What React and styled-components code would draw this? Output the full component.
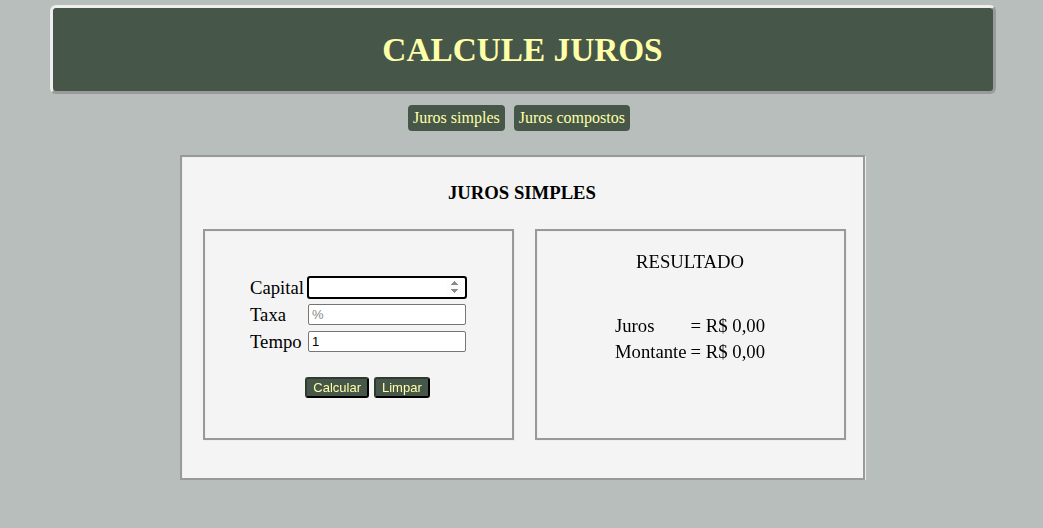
import React from 'react';
import styled, { createGlobalStyle } from 'styled-components';

const GlobalStyle = createGlobalStyle`
  html, body {
    margin: 0;
    background: #b8bebb;
    font-family: "Liberation Serif", "Times New Roman", serif;
    color: #000;
  }
`;

const Page = styled.div`
  padding-top: 5px;
  display: flex;
  flex-direction: column;
  align-items: center;
`;

const Header = styled.header`
  box-sizing: border-box;
  width: 946px;
  height: 89px;
  margin-left: 2px;
  background: #465749;
  border: 3px solid;
  border-color: #eeeeee #9a9a9a #9a9a9a #eeeeee;
  border-radius: 6px;
  display: flex;
  align-items: center;
  justify-content: center;
`;

const Title = styled.h1`
  margin: 0;
  font-size: 33.3px;
  font-weight: bold;
  color: #ffffa8;
`;

const Nav = styled.nav`
  display: flex;
  gap: 9px;
  margin-top: 11px;
  margin-right: 5px;
`;

const NavButton = styled.button`
  font-family: "Liberation Serif", serif;
  font-size: 16px;
  color: #ffffa8;
  background: #465749;
  border: none;
  border-radius: 4px;
  height: 26px;
  padding: 0 5px;
  cursor: pointer;
`;

const Panel = styled.section`
  box-sizing: border-box;
  width: 685px;
  height: 325px;
  margin-top: 24px;
  margin-left: 1px;
  background: #f4f4f4;
  border: 2px solid #999;
  box-shadow: 1px 1px 0 #eee, inset 1px 1px 0 #eee;
  padding: 0 0 0 21px;
`;

const PanelTitle = styled.h3`
  margin: 25px 0 0 -21px;
  text-align: center;
  font-size: 18.7px;
  line-height: 22px;
  font-weight: bold;
`;

const Columns = styled.div`
  display: flex;
  gap: 21px;
  margin-top: 25px;
`;

const Box = styled.div`
  box-sizing: border-box;
  width: 311px;
  height: 211px;
  border: 2px solid #999;
  box-shadow: 1px 1px 0 #eee, inset 1px 1px 0 #eee;
  display: flex;
  flex-direction: column;
  align-items: center;
  padding-top: ${p => p.$top}px;
`;

const Form = styled.table`
  border-collapse: separate;
  border-spacing: 4px 6px;
  margin: 0;
  font-size: 18.7px;
  td {
    padding: 0;
    height: 21px;
    line-height: 21px;
    vertical-align: middle;
  }
`;

const Input = styled.input`
  display: block;
  box-sizing: border-box;
  width: 158px;
  height: 21px;
  border: 1px solid #767676;
  border-radius: 2px;
  padding: 1px 3px;
  font-family: "Liberation Sans", Arial, sans-serif;
  font-size: 13px;
  background: #fff;
  color: #000;
  &::placeholder {
    color: #8a8a8a;
  }
  &:focus {
    outline: 2px solid #000;
    outline-offset: -1px;
  }
`;

const Actions = styled.div`
  display: flex;
  gap: 5px;
  margin-top: 19px;
  margin-left: 19px;
`;

const ActionButton = styled.button`
  font-family: "Liberation Sans", Arial, sans-serif;
  font-size: 13px;
  color: #ffffa8;
  background: #465749;
  border: 2px outset #2f3a31;
  border-radius: 3px;
  height: 21px;
  padding: 0 6px;
  line-height: 16px;
  cursor: pointer;
`;

const ResultTitle = styled.div`
  font-size: 18.7px;
  line-height: 22px;
`;

const ResultTable = styled.table`
  margin-top: 40px;
  border-collapse: collapse;
  font-size: 18.7px;
  td {
    padding: 0;
    height: 26px;
    line-height: 26px;
  }
  td + td {
    padding-left: 4px;
  }
`;

export default function App() {
  return (
    <>
      <GlobalStyle />
      <Page>
        <Header>
          <Title>CALCULE JUROS</Title>
        </Header>
        <Nav>
          <NavButton>Juros simples</NavButton>
          <NavButton>Juros compostos</NavButton>
        </Nav>
        <Panel>
          <PanelTitle>JUROS SIMPLES</PanelTitle>
          <Columns>
            <Box $top={40}>
              <Form>
                <tbody>
                  <tr>
                    <td>Capital</td>
                    <td><Input type="number" autoFocus /></td>
                  </tr>
                  <tr>
                    <td>Taxa</td>
                    <td><Input type="text" placeholder="%" /></td>
                  </tr>
                  <tr>
                    <td>Tempo</td>
                    <td><Input type="text" defaultValue="1" /></td>
                  </tr>
                </tbody>
              </Form>
              <Actions>
                <ActionButton>Calcular</ActionButton>
                <ActionButton>Limpar</ActionButton>
              </Actions>
            </Box>
            <Box $top={20}>
              <ResultTitle>RESULTADO</ResultTitle>
              <ResultTable>
                <tbody>
                  <tr>
                    <td>Juros</td>
                    <td>= R$ 0,00</td>
                  </tr>
                  <tr>
                    <td>Montante</td>
                    <td>= R$ 0,00</td>
                  </tr>
                </tbody>
              </ResultTable>
            </Box>
          </Columns>
        </Panel>
      </Page>
    </>
  );
}
